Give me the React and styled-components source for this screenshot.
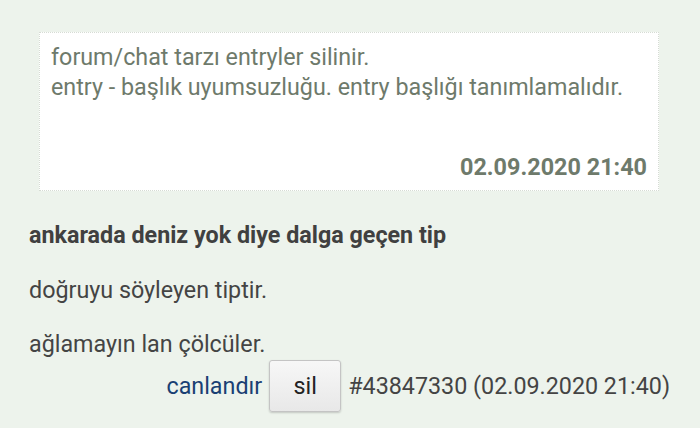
import React from "react";
import styled, { createGlobalStyle } from "styled-components";

const GlobalStyle = createGlobalStyle`
  html, body {
    margin: 0;
    padding: 0;
    background: #edf3ec;
    font-family: Roboto, "Liberation Sans", sans-serif;
  }
`;

const Page = styled.div`
  padding: 32px 30px 0 29px;
  height: 428px;
  box-sizing: border-box;
  overflow: hidden;
`;

const NoteBox = styled.div`
  margin: 0 11px 0 10px;
  background: #ffffff;
  border: 1px dotted #d6dcd4;
  padding: 9px 11px 8px 11px;
  color: #6e7a6b;
  font-size: 23.3px;
  line-height: 30px;
`;

const NoteLine = styled.div``;

const NoteDate = styled.div`
  margin-top: 50px;
  text-align: right;
  font-weight: bold;
  font-size: 23.4px;
`;

const Title = styled.h1`
  margin: 29px 0 0 0;
  font-size: 23.3px;
  line-height: 30px;
  font-weight: bold;
  color: #404040;
`;

const Paragraph = styled.p`
  margin: 26px 0 0 0;
  font-size: 23.3px;
  line-height: 28px;
  color: #444444;
`;

const Footer = styled.div`
  display: flex;
  justify-content: flex-end;
  align-items: center;
  gap: 7px;
  margin-top: 2px;
  font-size: 23.3px;
  color: #444444;
`;

const ReviveLink = styled.a`
  color: #1a3f73;
  text-decoration: none;
`;

const DeleteButton = styled.button`
  width: 72px;
  height: 52px;
  font-family: inherit;
  font-size: 23.3px;
  color: #222;
  background: linear-gradient(#f7f7f7, #e8e8e8);
  border: 1px solid #c4c4c4;
  border-radius: 3px;
  box-shadow: 0 1px 2px rgba(0, 0, 0, 0.18);
  padding: 0;
`;

const EntryMeta = styled.span``;

export default function App() {
  return (
    <>
      <GlobalStyle />
      <Page>
        <NoteBox>
          <NoteLine>forum/chat tarzı entryler silinir.</NoteLine>
          <NoteLine>entry - başlık uyumsuzluğu. entry başlığı tanımlamalıdır.</NoteLine>
          <NoteDate>02.09.2020 21:40</NoteDate>
        </NoteBox>
        <Title>ankarada deniz yok diye dalga geçen tip</Title>
        <Paragraph>doğruyu söyleyen tiptir.</Paragraph>
        <Paragraph>ağlamayın lan çölcüler.</Paragraph>
        <Footer>
          <ReviveLink href="#">canlandır</ReviveLink>
          <DeleteButton>sil</DeleteButton>
          <EntryMeta>#43847330 (02.09.2020 21:40)</EntryMeta>
        </Footer>
      </Page>
    </>
  );
}
